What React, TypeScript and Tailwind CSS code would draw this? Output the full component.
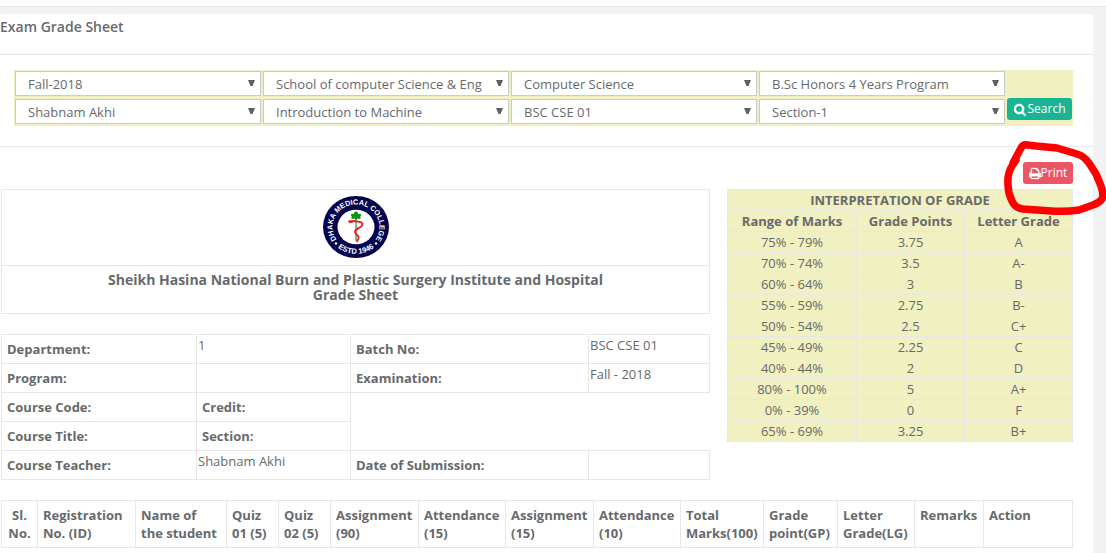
import React from "react";

const filters: { label: string; value: string }[] = [
  { label: "Semester", value: "Fall-2018" },
  { label: "School", value: "School of computer Science & Eng" },
  { label: "Department", value: "Computer Science" },
  { label: "Program", value: "B.Sc Honors 4 Years Program" },
  { label: "Teacher", value: "Shabnam Akhi" },
  { label: "Course", value: "Introduction to Machine" },
  { label: "Batch", value: "BSC CSE 01" },
  { label: "Section", value: "Section-1" },
];

const grades: [string, string, string][] = [
  ["75% - 79%", "3.75", "A"],
  ["70% - 74%", "3.5", "A-"],
  ["60% - 64%", "3", "B"],
  ["55% - 59%", "2.75", "B-"],
  ["50% - 54%", "2.5", "C+"],
  ["45% - 49%", "2.25", "C"],
  ["40% - 44%", "2", "D"],
  ["80% - 100%", "5", "A+"],
  ["0% - 39%", "0", "F"],
  ["65% - 69%", "3.25", "B+"],
];

const columns: { lines: [string, string?]; width: string; center?: boolean }[] = [
  { lines: ["Sl.", "No."], width: "w-[36px]", center: true },
  { lines: ["Registration", "No. (ID)"], width: "w-[98px]" },
  { lines: ["Name of", "the student"], width: "w-[91px]" },
  { lines: ["Quiz", "01 (5)"], width: "w-[52px]" },
  { lines: ["Quiz", "02 (5)"], width: "w-[52px]" },
  { lines: ["Assignment", "(90)"], width: "w-[88px]" },
  { lines: ["Attendance", "(15)"], width: "w-[87px]" },
  { lines: ["Assignment", "(15)"], width: "w-[88px]" },
  { lines: ["Attendance", "(10)"], width: "w-[87px]" },
  { lines: ["Total", "Marks(100)"], width: "w-[83px]" },
  { lines: ["Grade", "point(GP)"], width: "w-[74px]" },
  { lines: ["Letter", "Grade(LG)"], width: "w-[77px]" },
  { lines: ["Remarks"], width: "w-[69px]" },
  { lines: ["Action"], width: "w-auto" },
];

function SearchIcon() {
  return (
    <svg viewBox="0 0 1664 1792" className="h-[13px] w-3" fill="currentColor" aria-hidden="true">
      <path d="M1152 832q0-185-131.5-316.5t-316.5-131.5-316.5 131.5-131.5 316.5 131.5 316.5 316.5 131.5 316.5-131.5 131.5-316.5zM1664 1664q0 52-38 90t-90 38q-54 0-90-38l-343-342q-179 124-399 124-143 0-273.5-55.5t-225-150-150-225-55.5-273.5 55.5-273.5 150-225 225-150 273.5-55.5 273.5 55.5 225 150 150 225 55.5 273.5q0 220-124 399l343 343q37 37 37 90z" stroke="currentColor" strokeWidth="60" />
    </svg>
  );
}

function PrintIcon() {
  return (
    <svg viewBox="0 0 1664 1792" className="h-[13px] w-3" fill="currentColor" aria-hidden="true">
      <path d="M384 1536h896v-256h-896v256zM384 896h896v-384h-160q-40 0-68-28t-28-68v-160h-640v640zM1536 960q0-26-19-45t-45-19-45 19-19 45 19 45 45 19 45-19 19-45zM1664 960v416q0 13-9.5 22.5t-22.5 9.5h-224v160q0 40-28 68t-68 28h-960q-40 0-68-28t-28-68v-160h-224q-13 0-22.5-9.5t-9.5-22.5v-416q0-79 56.5-135.5t135.5-56.5h64v-544q0-40 28-68t68-28h672q40 0 88 20t76 48l152 152q28 28 48 76t20 88v256h64q79 0 135.5 56.5t56.5 135.5z" stroke="currentColor" strokeWidth="40" />
    </svg>
  );
}

function Seal() {
  return (
    <svg viewBox="0 0 66 62" className="h-[62px] w-[66px]" role="img" aria-label="Dhaka Medical College seal">
      <defs>
        <path id="seal-top" d="M 15 45.5 A 23.500 22.500 0 1 1 51 45.5" />
        <path id="seal-bottom" d="M 10 47 A 29 27.500 0 0 0 56 47" />
      </defs>
      <ellipse cx="33" cy="31" rx="33" ry="31" fill="#05054f" />
      <ellipse cx="33" cy="31" rx="18.500" ry="17.200" fill="#fff" />
      <g fill="#fff" fontFamily="Liberation Sans, Arial, sans-serif" fontWeight="700" textAnchor="middle">
        <text fontSize="7.300">
          <textPath href="#seal-top" startOffset="50%">DHAKA MEDICAL COLLEGE</textPath>
        </text>
        <text fontSize="7.500">
          <textPath href="#seal-bottom" startOffset="50%">ESTD 1946</textPath>
        </text>
      </g>
      <circle cx="13" cy="47.500" r="1.200" fill="#fff" />
      <circle cx="53" cy="47.500" r="1.200" fill="#fff" />
      <path d="M33 22V45" stroke="#3f9a4a" strokeWidth="1.300" />
      <path d="M33 15.300Q35.500 16.500 35.200 18Q37 17.300 38.300 18.700Q38 20 37 20.400Q38.200 21 37.500 22.500Q36 23.300 34.500 22.600L33 24L31.500 22.600Q30 23.300 28.500 22.500Q27.800 21 29 20.400Q28 20 27.700 18.700Q29 17.300 30.800 18Q30.500 16.500 33 15.300z" fill="#0c930f" />
      <path d="M26 25.300L30 25C33 24.600 34 26.300 37 25.800C40 26.500 40 29.500 37.500 31C35 32.500 32 33.300 32 36C32 38.500 35.800 38.800 35.600 41.500C35.400 43.300 34.500 44 34.200 45.500" fill="none" stroke="#f3131b" strokeWidth="1.800" strokeLinecap="round" />
      <path d="M26 26.800L30.500 26" stroke="#f3131b" strokeWidth="1" />
    </svg>
  );
}

function Filter({ label, value }: { label: string; value: string }) {
  return (
    <div className="relative h-[25px]">
      <select
        aria-label={label}
        defaultValue={value}
        className="block h-full w-full appearance-none rounded-none border border-[#c9cbcd] bg-white pt-px pr-6 pl-3 text-[13px] leading-[22px] text-[#676a6c]"
      >
        <option>{value}</option>
      </select>
      <svg viewBox="0 0 7 6" className="pointer-events-none absolute top-[9px] right-1.5 h-1.5 w-[7px]" aria-hidden="true">
        <path d="M0 0H7L4.500 6H2.500z" fill="#5d6163" />
      </svg>
    </div>
  );
}

function Name({ children }: { children: React.ReactNode }) {
  return <th scope="row" className="border border-[#e7e7e7] px-[5px] text-left align-middle font-bold">{children}</th>;
}

function Value({ children }: { children?: React.ReactNode }) {
  return <td className="border border-[#e7e7e7] px-px pt-px align-top">{children}</td>;
}

export default function App() {
  return (
    <div className="flex min-h-screen flex-col bg-[#f2f2f2] font-['Open_Sans',sans-serif] text-[13px] leading-[18px] text-[#676a6c]">
      <div className="h-[7px] border-b border-[#e5e5e5] bg-white" />
      <main className="mt-[7px] mr-[13px] flex-1 bg-white pb-1">
        <header className="h-[41px] border-b border-[#e7e7e7] pt-1">
          <h1 className="text-sm leading-[18px] font-semibold">Exam Grade Sheet</h1>
        </header>

        <form className="border-b border-[#e7eaec] pt-[15px] pr-5 pb-5 pl-3.5" onSubmit={(e) => e.preventDefault()}>
          <div className="flex gap-0.5 bg-[#f0f0c0] px-px pt-px pb-0.5">
            <div className="grid flex-1 grid-cols-4 gap-x-0.5 gap-y-[3px]">
              {filters.map((f) => (
                <Filter key={f.label} label={f.label} value={f.value} />
              ))}
            </div>
            <button type="submit" className="mb-1 flex h-[22px] w-[65px] items-center justify-center gap-0.5 self-end rounded-[3px] bg-[#1ab394] text-xs text-white">
              <SearchIcon />
              Search
            </button>
          </div>
        </form>

        <div className="pt-[15px] pr-5 pl-px">
          <div className="flex justify-end">
            <div className="relative">
              <button type="button" onClick={() => window.print()} className="flex h-[22px] w-[50px] items-center justify-center rounded-[3px] bg-[#ed5565] text-xs text-white">
                <PrintIcon />
                Print
              </button>
              <svg viewBox="0 0 103 76" className="pointer-events-none absolute -top-[22px] -left-5 h-[76px] w-[103px] max-w-none" fill="none" aria-hidden="true">
                <path d="M10 23L18 8Q20 4 25 5L33 6L54 8L74 14Q81 16 86 23L93 34L98 46Q101 55 99 59Q96 63 90 65L76 70Q63 72 48 71L20 69Q12 68 9 61Q5 53 5 45Q4 34 9 26L13 20" stroke="#ff0000" strokeWidth="7.500" strokeLinecap="round" strokeLinejoin="round" />
              </svg>
            </div>
          </div>

          <div className="flex items-start gap-[17px] pt-[5px]">
            <div className="min-w-0 flex-1">
              <section className="border border-[#e7e7e7] text-center">
                <div className="flex h-[76px] items-center justify-center border-b border-[#e7e7e7] pb-0.5">
                  <Seal />
                </div>
                <h2 className="h-[47px] pt-1.5 text-sm leading-[15px] font-bold">
                  Sheikh Hasina National Burn and Plastic Surgery Institute and Hospital
                  <br />
                  Grade Sheet
                </h2>
              </section>

              <table className="mt-5 w-full table-fixed border-collapse">
                <colgroup>
                  <col className="w-[195px]" />
                  <col className="w-[154px]" />
                  <col className="w-[238px]" />
                  <col />
                </colgroup>
                <tbody>
                  <tr className="h-[29px]">
                    <Name>Department:</Name>
                    <Value>1</Value>
                    <Name>Batch No:</Name>
                    <Value>BSC CSE 01</Value>
                  </tr>
                  <tr className="h-[29px]">
                    <Name>Program:</Name>
                    <Value />
                    <Name>Examination:</Name>
                    <Value>Fall - 2018</Value>
                  </tr>
                  <tr className="h-[29px]">
                    <Name>Course Code:</Name>
                    <Name>Credit:</Name>
                    <td colSpan={2} rowSpan={2} />
                  </tr>
                  <tr className="h-[29px]">
                    <Name>Course Title:</Name>
                    <Name>Section:</Name>
                  </tr>
                  <tr className="h-[29px]">
                    <Name>Course Teacher:</Name>
                    <Value>Shabnam Akhi</Value>
                    <Name>Date of Submission:</Name>
                    <Value />
                  </tr>
                </tbody>
              </table>
            </div>

            <table className="w-[346px] table-fixed border-collapse bg-[#f0f0c0] text-center">
              <colgroup>
                <col className="w-[129px]" />
                <col className="w-[108px]" />
                <col />
              </colgroup>
              <thead>
                <tr className="h-[21px]">
                  <th colSpan={3} className="border border-[#e7e7e7] font-bold">INTERPRETATION OF GRADE</th>
                </tr>
                <tr className="h-[21px]">
                  <th className="border border-[#e7e7e7] font-bold">Range of Marks</th>
                  <th className="border border-[#e7e7e7] font-bold">Grade Points</th>
                  <th className="border border-[#e7e7e7] font-bold">Letter Grade</th>
                </tr>
              </thead>
              <tbody>
                {grades.map((row) => (
                  <tr key={row[0]} className="h-[21px]">
                    {row.map((cell, i) => (
                      <td key={i} className="border border-[#e7e7e7]">{cell}</td>
                    ))}
                  </tr>
                ))}
              </tbody>
            </table>
          </div>

          <table className="mt-5 w-full table-fixed border-collapse">
            <thead>
              <tr className="h-[47px]">
                {columns.map((c, i) => (
                  <th
                    key={i}
                    className={`${c.width} border border-[#e7e7e7] px-[5px] pt-[5px] align-top font-bold whitespace-nowrap ${c.center ? "text-center" : "text-left"}`}
                  >
                    {c.lines[0]}
                    {c.lines[1] && (
                      <>
                        <br />
                        {c.lines[1]}
                      </>
                    )}
                  </th>
                ))}
              </tr>
            </thead>
          </table>
        </div>
      </main>
    </div>
  );
}
